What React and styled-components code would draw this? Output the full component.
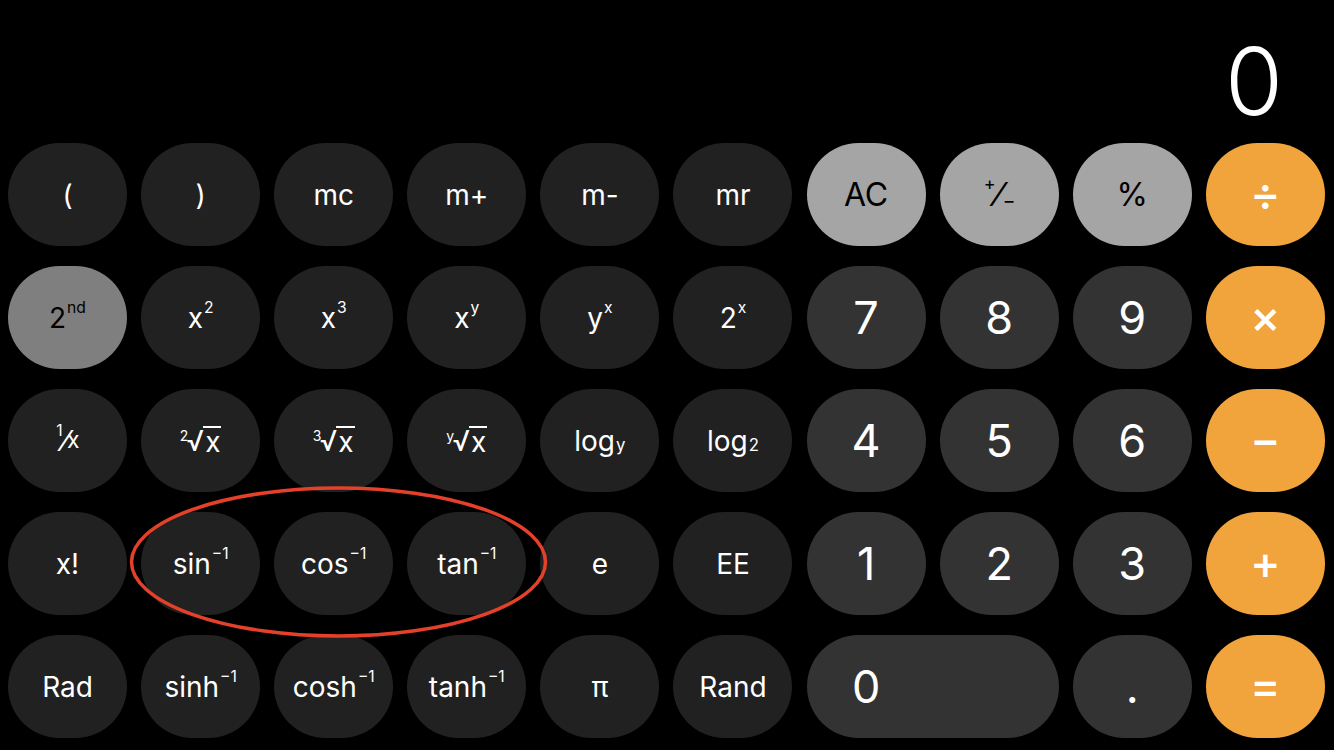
import React from "react";
import styled, { createGlobalStyle, css } from "styled-components";

const GlobalStyle = createGlobalStyle`
  html, body {
    margin: 0;
    padding: 0;
    background: #000;
  }
  body {
    font-family: Inter, "Liberation Sans", "DejaVu Sans", sans-serif;
    -webkit-font-smoothing: antialiased;
  }
`;

const Screen = styled.div`
  position: relative;
  width: 1334px;
  height: 750px;
  background: #000;
  overflow: hidden;
`;

const Display = styled.div`
  box-sizing: border-box;
  height: 143px;
  padding: 34px 51px 0 0;
  text-align: right;
  color: #fff;
  font-size: 94px;
  font-weight: 300;
  line-height: 94px;
`;

const Keypad = styled.div`
  display: grid;
  grid-template-columns: repeat(10, 119px);
  grid-auto-rows: 103px;
  column-gap: 14.1px;
  row-gap: 20px;
  padding: 0 8px;
`;

const variants = {
  fn: css`
    background: #212121;
    color: #fff;
    font-size: 28px;
  `,
  digit: css`
    background: #333333;
    color: #fff;
    font-size: 45px;
  `,
  gray: css`
    background: #a5a5a5;
    color: #000;
    font-size: 32px;
  `,
  active: css`
    background: #7f7f7f;
    color: #000;
    font-size: 28px;
  `,
  op: css`
    background: #f1a33c;
    color: #fff;
    font-size: 46px;
  `,
};

const Key = styled.button`
  display: flex;
  align-items: center;
  justify-content: center;
  border: none;
  border-radius: 52px;
  padding: 0;
  font-family: inherit;
  font-weight: 400;
  line-height: 1;
  white-space: nowrap;
  ${(p) => variants[p.$variant]}
  ${(p) =>
    p.$wide &&
    css`
      grid-column: span 2;
      padding-right: 133px;
    `}
`;

const Sup = styled.span`
  font-size: 0.56em;
  position: relative;
  top: -0.6em;
  margin-left: 1px;
`;

const Sub = styled.span`
  font-size: 0.6em;
  position: relative;
  top: 0.3em;
  margin-left: 1px;
`;

const FracDen = styled.span`
  font-size: 0.82em;
  margin-left: -1px;
`;

const Index = styled.span`
  font-size: 0.5em;
  line-height: 1;
  position: relative;
  top: -0.9em;
  margin-right: -0.12em;
`;

const Radical = styled.span`
  display: inline-flex;
  align-items: flex-end;
`;

const Radicand = styled.span`
  border-top: 2px solid currentColor;
  padding: 1px 1px 0 2px;
  line-height: 0.95;
  margin-left: -1px;
`;

const OpGlyph = styled.span`
  font-weight: 500;
  position: relative;
  top: -2px;
`;

const Annotation = styled.svg`
  position: absolute;
  left: 0;
  top: 0;
  pointer-events: none;
`;

const root = (index) => (
  <Radical>
    <Index>{index}</Index>
    <span>√</span>
    <Radicand>x</Radicand>
  </Radical>
);

const inv = <Sup>−1</Sup>;

const keys = [
  ["fn", "("],
  ["fn", ")"],
  ["fn", "mc"],
  ["fn", "m+"],
  ["fn", "m-"],
  ["fn", "mr"],
  ["gray", "AC"],
  [
    "gray",
    <>
      <Sup>+</Sup>⁄<Sub>−</Sub>
    </>,
  ],
  ["gray", "%"],
  ["op", <OpGlyph>÷</OpGlyph>],

  ["active", <>2<Sup>nd</Sup></>],
  ["fn", <>x<Sup>2</Sup></>],
  ["fn", <>x<Sup>3</Sup></>],
  ["fn", <>x<Sup>y</Sup></>],
  ["fn", <>y<Sup>x</Sup></>],
  ["fn", <>2<Sup>x</Sup></>],
  ["digit", "7"],
  ["digit", "8"],
  ["digit", "9"],
  ["op", <OpGlyph>×</OpGlyph>],

  ["fn", <><Sup>1</Sup>⁄<FracDen>x</FracDen></>],
  ["fn", root("2")],
  ["fn", root("3")],
  ["fn", root("y")],
  ["fn", <>log<Sub>y</Sub></>],
  ["fn", <>log<Sub>2</Sub></>],
  ["digit", "4"],
  ["digit", "5"],
  ["digit", "6"],
  ["op", <OpGlyph>−</OpGlyph>],

  ["fn", "x!"],
  ["fn", <>sin{inv}</>],
  ["fn", <>cos{inv}</>],
  ["fn", <>tan{inv}</>],
  ["fn", "e"],
  ["fn", "EE"],
  ["digit", "1"],
  ["digit", "2"],
  ["digit", "3"],
  ["op", <OpGlyph>+</OpGlyph>],

  ["fn", "Rad"],
  ["fn", <>sinh{inv}</>],
  ["fn", <>cosh{inv}</>],
  ["fn", <>tanh{inv}</>],
  ["fn", "π"],
  ["fn", "Rand"],
  ["digit", "0", true],
  ["digit", "."],
  ["op", <OpGlyph>=</OpGlyph>],
];

export default function App() {
  return (
    <>
      <GlobalStyle />
      <Screen>
        <Display>0</Display>
        <Keypad>
          {keys.map(([variant, label, wide], i) => (
            <Key key={i} $variant={variant} $wide={wide}>
              {label}
            </Key>
          ))}
        </Keypad>
        <Annotation width="1334" height="750" viewBox="0 0 1334 750">
          <ellipse
            cx="338.5"
            cy="562"
            rx="207"
            ry="74"
            fill="none"
            stroke="#e5402a"
            strokeWidth="3.5"
          />
        </Annotation>
      </Screen>
    </>
  );
}
